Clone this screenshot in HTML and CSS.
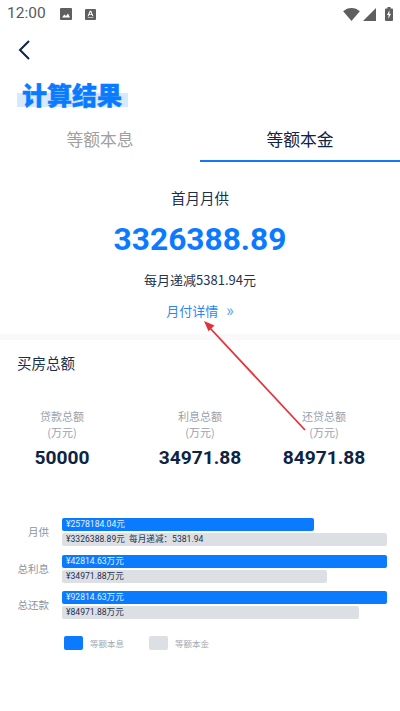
FILE: index.html
```html
<!DOCTYPE html>
<html lang="zh">
<head>
<meta charset="utf-8">
<title>计算结果</title>
<link rel="stylesheet" href="styles.css">
</head>
<body>
<div class="page">
  <div class="status">
    <span class="time">12:00</span>
    <svg class="st-ic first" viewBox="0 0 12 12"><path fill="#5f5f5f" d="M1 0h10a1 1 0 0 1 1 1v10a1 1 0 0 1-1 1H1a1 1 0 0 1-1-1V1a1 1 0 0 1 1-1z"/><path fill="#fff" d="M2 9.500l2.300-3 1.700 1.500 2-2.500 2 4z"/></svg>
    <svg class="st-ic second" viewBox="0 0 12 12"><path fill="#5f5f5f" d="M1 0h10a1 1 0 0 1 1 1v10a1 1 0 0 1-1 1H1a1 1 0 0 1-1-1V1a1 1 0 0 1 1-1z"/><path fill="#fff" d="M5.200 2h1.600l2.400 6H8l-.5-1.400h-3L4 8H2.800zM4.900 5.600h2.200L6 3.200z"/><path fill="#fff" d="M3 9.200h6v.6H3z"/></svg>
    <span class="spacer"></span>
    <svg class="wifi" viewBox="0 0 18 14"><path fill="#5f5f5f" d="M0 3.500C2.500 1.300 5.600 0 9 0s6.500 1.300 9 3.500L9 14z"/></svg>
    <svg class="signal" viewBox="0 0 13 13"><path fill="#5f5f5f" d="M13 0v13H0z"/></svg>
    <svg class="battery" viewBox="0 0 8 14"><path fill="#5f5f5f" d="M2.500 0h3v1.400H7a1 1 0 0 1 1 1V13a1 1 0 0 1-1 1H1a1 1 0 0 1-1-1V2.400a1 1 0 0 1 1-1h1.500z"/><path fill="#fff" d="M4.600 3L2 8h1.600l-.3 4L6 6.800H4.300z"/></svg>
  </div>

  <div class="nav">
    <svg class="back" viewBox="0 0 14 22"><path d="M12 2L3 11l9 9" fill="none" stroke="#0d2444" stroke-width="2"/></svg>
  </div>

  <h1 class="title"><span>计算结果</span></h1>

  <div class="tabs">
    <div class="tab">等额本息</div>
    <div class="tab active">等额本金</div>
  </div>

  <section class="summary">
    <div class="first-label">首月月供</div>
    <div class="amount">3326388.89</div>
    <div class="decrease">每月递减5381.94元</div>
    <div class="detail">月付详情<span class="chev">»</span></div>
  </section>

  <section class="totals">
    <h2 class="sec-title">买房总额</h2>
    <div class="stats">
      <div class="stat"><div class="stat-label">贷款总额<br>(万元)</div><div class="stat-value">50000</div></div>
      <div class="stat"><div class="stat-label">利息总额<br>(万元)</div><div class="stat-value">34971.88</div></div>
      <div class="stat"><div class="stat-label">还贷总额<br>(万元)</div><div class="stat-value">84971.88</div></div>
    </div>
    <div class="chart">
      <div class="group">
        <div class="g-label">月供</div>
        <div class="bars">
          <div class="bar blue w-252">¥2578184.04元</div>
          <div class="bar gray">¥3326388.89元&nbsp;&nbsp;每月递减：5381.94</div>
        </div>
      </div>
      <div class="group">
        <div class="g-label">总利息</div>
        <div class="bars">
          <div class="bar blue">¥42814.63万元</div>
          <div class="bar gray w-265">¥34971.88万元</div>
        </div>
      </div>
      <div class="group">
        <div class="g-label">总还款</div>
        <div class="bars">
          <div class="bar blue">¥92814.63万元</div>
          <div class="bar gray w-297">¥84971.88万元</div>
        </div>
      </div>
    </div>
    <div class="legend">
      <div class="lg-item"><i class="sw sw-blue"></i>等额本息</div>
      <div class="lg-item"><i class="sw sw-gray"></i>等额本金</div>
    </div>
  </section>

  <svg class="arrow" viewBox="0 0 400 711"><path d="M305 430L209 327" stroke="#e2333a" stroke-width="1.800" fill="none"/><path d="M204 321l10.500 4.500-6 5.800z" fill="#e2333a"/></svg>
</div>
</body>
</html>
```
FILE: styles.css
```css
* { box-sizing: border-box; }
html, body { margin: 0; padding: 0; background: #fff; }
body { font-family: "Noto Sans CJK SC", Roboto, sans-serif; color: #0d2444; }
.page { position: relative; width: 400px; height: 711px; overflow: hidden; background: #fff; }

.status { display: flex; align-items: center; height: 28px; padding: 0 7px; }
.time { font: 400 15.500px/1 Roboto, sans-serif; color: #5a5a5a; width: 53px; }
.st-ic { width: 12px; height: 12px; display: block; }
.st-ic.second { margin-left: 13px; width: 11px; height: 11px; }
.spacer { flex: 1; }
.wifi { width: 17px; height: 13px; display: block; }
.signal { width: 13px; height: 13px; margin-left: 3px; display: block; margin-top: 1px; }
.battery { width: 8px; height: 14px; margin-left: 9px; display: block; }

.nav { height: 41px; padding: 11px 0 0 17px; }
.back { width: 14px; height: 22px; display: block; }

.title { margin: 0; padding: 6px 0 0 17px; height: 45px; line-height: 1; }
.title span {
  display: inline-block;
  width: 111px;
  height: 25px;
  padding-left: 5px;
  font-size: 25px;
  line-height: 25px;
  font-weight: 900;
  color: #0a7bff;
  -webkit-text-stroke: 0.4px #0a7bff;
  white-space: nowrap;
  background: linear-gradient(to bottom, transparent 11px, #d5e9ff 11px);
}

.tabs { display: flex; height: 51px; margin-top: 1px; }
.tab { flex: 1; text-align: center; font-size: 16.800px; line-height: 24px; padding-top: 12px; color: #a0a0a0; border-bottom: 2px solid transparent; height: 47px; }
.tab.active { color: #0d2444; border-bottom-color: #1678f2; }

.summary { height: 178px; text-align: center; padding-top: 26px; border-bottom: 6px solid #f9f9f9; margin-top: -4px; }
.first-label { font-size: 14.500px; line-height: 20px; color: #1c2f4c; }
.amount { font: 700 31.700px/38px Roboto, sans-serif; color: #0a7bff; margin-top: 13px; }
.decrease { font-size: 13px; line-height: 18px; color: #24344f; margin-top: 12px; }
.detail { font-size: 13px; line-height: 20px; color: #2b87f5; margin-top: 12px; }
.chev { margin-left: 8px; font: 400 16px/20px Roboto, sans-serif; color: #5aa2f7; }

.totals { padding: 0 13px 0 0; }
.sec-title { margin: 0; padding: 13px 0 0 17px; font-size: 14.500px; line-height: 20px; font-weight: 400; color: #1c2f4c; }
.stats { display: grid; grid-template-columns: 124px 152px 96px; margin-top: 35px; text-align: center; }
.stat-label { font-size: 11px; line-height: 16px; color: #98a1ae; }
.stat-value { font: 700 19.200px/24px Roboto, sans-serif; color: #0d2444; margin-top: 6px; }

.chart { margin-top: 48px; display: flex; flex-direction: column; gap: 8.500px; }
.group { display: flex; align-items: center; height: 28px; }
.g-label { width: 62px; padding-right: 13px; text-align: right; font-size: 10.500px; line-height: 16px; color: #8b94a1; }
.bars { width: 325px; display: flex; flex-direction: column; gap: 2px; }
.bar { height: 13px; border-radius: 2px; padding-left: 4px; font: 400 8.600px/13px Roboto, "Noto Sans CJK SC", sans-serif; white-space: nowrap; }
.blue { background: #0a7bff; color: #e8f2ff; }
.gray { background: #dce0e4; color: #1c2f4c; }
.w-252 { width: 252px; }
.w-265 { width: 265px; }
.w-297 { width: 297px; }

.legend { display: flex; margin: 17px 0 0 64px; }
.lg-item { display: flex; align-items: center; width: 85px; font-size: 8.500px; line-height: 14px; color: #a2a9b4; }
.sw { display: block; width: 19px; height: 14px; border-radius: 2px; margin-right: 7px; }
.sw-blue { background: #0a7bff; }
.sw-gray { background: #dce0e4; }

.arrow { position: absolute; left: 0; top: 0; width: 400px; height: 711px; pointer-events: none; }
```
